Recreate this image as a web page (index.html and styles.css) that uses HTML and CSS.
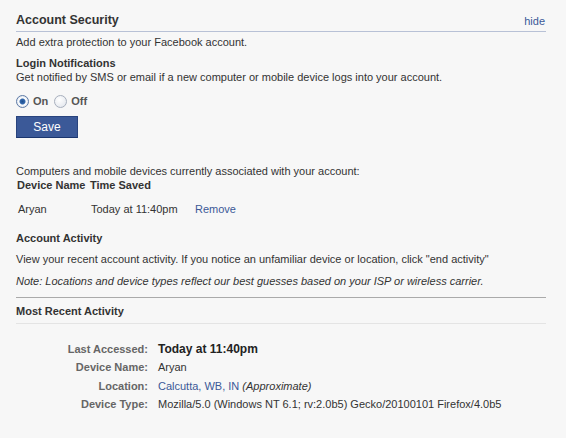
FILE: index.html
```html
<!DOCTYPE html>
<html>
<head>
  <title>Account Security</title>
  <link rel="stylesheet" href="styles.css">
</head>
<body>
  <div class="panel">
    <div class="panel-head">
      <h3>Account Security</h3>
      <a href="#" class="hide">hide</a>
    </div>
    <p class="intro">Add extra protection to your Facebook account.</p>

    <div class="block">
      <div class="label">Login Notifications</div>
      <div>Get notified by SMS or email if a new computer or mobile device logs into your account.</div>
      <div class="radios">
        <label><input type="radio" name="notify" checked> On</label>
        <label><input type="radio" name="notify"> Off</label>
      </div>
      <button type="button" class="save">Save</button>
    </div>

    <div class="devices">
      <div>Computers and mobile devices currently associated with your account:</div>
      <table class="device-table">
        <tr><th>Device Name</th><th>Time Saved</th><th></th></tr>
        <tr><td>Aryan</td><td>Today at 11:40pm</td><td><a href="#">Remove</a></td></tr>
      </table>
    </div>

    <div class="activity">
      <div class="label">Account Activity</div>
      <p>View your recent account activity. If you notice an unfamiliar device or location, click "end activity"</p>
      <p class="note">Note: Locations and device types reflect our best guesses based on your ISP or wireless carrier.</p>
    </div>

    <div class="recent">
      <div class="label recent-title">Most Recent Activity</div>
      <table class="details">
        <tr><th>Last Accessed:</th><td class="strong">Today at 11:40pm</td></tr>
        <tr><th>Device Name:</th><td>Aryan</td></tr>
        <tr><th>Location:</th><td><a href="#">Calcutta, WB, IN</a> <i>(Approximate)</i></td></tr>
        <tr><th>Device Type:</th><td>Mozilla/5.0 (Windows NT 6.1; rv:2.0b5) Gecko/20100101 Firefox/4.0b5</td></tr>
      </table>
    </div>
  </div>
</body>
</html>
```

FILE: styles.css
```css
body {
  margin: 0;
  background: #f7f7f7;
  font-family: "Liberation Sans", Tahoma, sans-serif;
  font-size: 11px;
  line-height: 14px;
  color: #333;
}
a {
  color: #3b5998;
  text-decoration: none;
}
p {
  margin: 0;
}
.panel {
  width: 530px;
  margin-left: 16px;
  padding-top: 12px;
}
.panel-head {
  display: flex;
  justify-content: space-between;
  align-items: flex-end;
  border-bottom: 1px solid #b8c1d6;
  padding-bottom: 3px;
}
.panel-head h3 {
  margin: 0;
  font-size: 12.5px;
  line-height: 16px;
  color: #333;
}
.hide {
  margin-right: 1px;
}
.intro {
  margin-top: 3px;
}
.label {
  font-weight: bold;
  color: #333;
}
.block {
  margin-top: 7px;
}
.radios {
  display: flex;
  gap: 6px;
  margin-top: 10px;
  font-weight: bold;
  color: #555;
}
.radios label {
  display: flex;
  align-items: center;
  gap: 4px;
}
.radios input {
  appearance: none;
  margin: 0;
  width: 13px;
  height: 13px;
  border: 1px solid #a7afbd;
  border-radius: 50%;
  background: radial-gradient(circle at 40% 35%, #fff, #dfe3ea);
}
.radios input:checked {
  border-color: #5d7aa6;
  background: radial-gradient(circle, #1d4f8f 0, #3569ad 2.5px, #fff 3.5px, #dde3ec 6px);
}
.save {
  margin-top: 8px;
  width: 62px;
  height: 22px;
  background: #3b5998;
  border: 1px solid #29447e;
  border-bottom-color: #1a356e;
  color: #fff;
  font-family: inherit;
  font-size: 12px;
  padding: 0;
}
.devices {
  margin-top: 26px;
}
.device-table {
  border-collapse: collapse;
}
.device-table th {
  text-align: left;
  font-weight: bold;
  white-space: nowrap;
  padding: 0 0 10px 1px;
}
.device-table td {
  padding: 0 0 0 2px;
  white-space: nowrap;
}
.device-table td:first-child {
  width: 71px;
}
.device-table td:nth-child(2) {
  width: 102px;
}
.activity {
  margin-top: 15px;
}
.activity p {
  margin-top: 7px;
}
.activity .note {
  font-style: italic;
  margin-top: 8px;
  padding-bottom: 9px;
  border-bottom: 1px solid #aaa;
}
.recent-title {
  padding: 6px 0 5px;
  border-bottom: 1px solid #e4e4e4;
}
.details {
  margin-top: 16px;
  border-collapse: collapse;
}
.details th {
  width: 132px;
  text-align: right;
  color: #666;
  white-space: nowrap;
  padding: 2px 10px 2px 0;
}
.details td {
  padding: 2px 0;
  height: 14.3px;
  white-space: nowrap;
}
.details .strong {
  font-weight: bold;
  font-size: 12px;
  color: #222;
}
```
